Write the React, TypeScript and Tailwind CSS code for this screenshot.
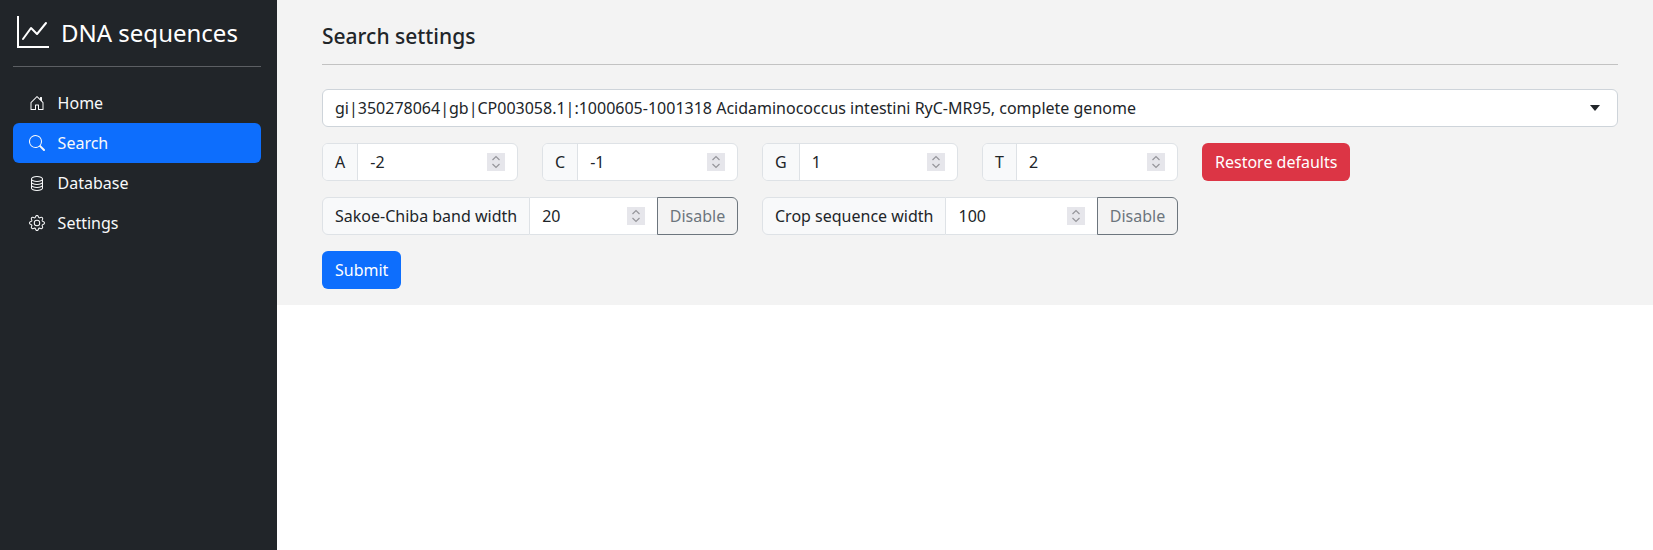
import { BsDatabase, BsGear, BsGraphUp, BsHouseDoor, BsSearch } from "react-icons/bs";

const navItems = [
  { label: "Home", icon: BsHouseDoor },
  { label: "Search", icon: BsSearch, active: true },
  { label: "Database", icon: BsDatabase },
  { label: "Settings", icon: BsGear },
];

const inputClass =
  "min-w-0 flex-1 bg-white pl-3 text-base text-[#212529] outline-none appearance-none [&::-webkit-inner-spin-button]:appearance-none";

function Spinner() {
  return (
    <span className="flex size-[18px] shrink-0 items-center justify-center bg-[#e6e6eb]">
      <svg width="10" height="16" viewBox="0 0 10 16" fill="none" stroke="#96969b" strokeWidth="1.2">
        <path d="M1.5 6 5 2.5 8.5 6" />
        <path d="M1.5 10 5 13.5 8.5 10" />
      </svg>
    </span>
  );
}

function LetterInput({ letter, value }: { letter: string; value: string }) {
  return (
    <div className="flex h-[38px] w-[196px] overflow-hidden rounded-md border border-[#dee2e6] bg-white">
      <span className="flex items-center border-r border-[#dee2e6] bg-[#f8f9fa] px-3 text-base text-[#212529]">
        {letter}
      </span>
      <input type="number" defaultValue={value} className={inputClass} />
      <span className="flex items-center pr-3">
        <Spinner />
      </span>
    </div>
  );
}

function WidthInput({ label, value }: { label: string; value: string }) {
  return (
    <div className="flex h-[38px] w-[416px]">
      <span className="flex items-center whitespace-nowrap rounded-l-md border border-[#dee2e6] bg-[#f8f9fa] px-3 text-base text-[#212529]">
        {label}
      </span>
      <span className="flex min-w-0 flex-1 border-y border-[#dee2e6] bg-white">
        <input type="number" defaultValue={value} className={inputClass} />
        <span className="flex items-center pr-3">
          <Spinner />
        </span>
      </span>
      <button className="w-[81px] shrink-0 rounded-r-md border border-[#6c757d] text-base text-[#6c757d]">
        Disable
      </button>
    </div>
  );
}

export default function App() {
  return (
    <div className="flex min-h-[550px] bg-white font-['Noto_Sans',sans-serif]">
      <aside className="w-[277px] shrink-0 bg-[#212529] pt-[13px] pr-4 pl-[13px] text-white">
        <div className="flex h-[40px] items-center gap-3 pl-[4px]">
          <BsGraphUp size={32} className="mb-[2px]" />
          <span className="text-2xl">DNA sequences</span>
        </div>
        <hr className="mt-[13px] mb-[16px] border-[#5c5f63]" />
        <nav className="flex flex-col">
          {navItems.map(({ label, icon: Icon, active }) => (
            <a
              key={label}
              href="#"
              className={`flex h-[40px] items-center gap-[12.6px] rounded-md pl-4 text-base text-[#f8f9fa] ${
                active ? "bg-[#0d6efd]" : ""
              }`}
            >
              <Icon size={16} />
              {label}
            </a>
          ))}
        </nav>
      </aside>

      <main className="flex-1">
        <section className="flex flex-col bg-[#f3f3f3] pt-6 pr-[35px] pb-4 pl-[45px]">
          <h1 className="text-[21px] leading-6 font-medium text-[#212529]">Search settings</h1>
          <hr className="mt-[16px] mb-6 border-[#c2c2c2]" />
          <div className="relative">
            <select className="h-[38px] w-full appearance-none rounded-md border border-[#ced4da] bg-white pl-3 text-base text-[#212529]">
              <option>
                gi|350278064|gb|CP003058.1|:1000605-1001318 Acidaminococcus intestini RyC-MR95, complete genome
              </option>
            </select>
            <svg
              className="pointer-events-none absolute top-[16px] right-[18px]"
              width="10"
              height="6"
              viewBox="0 0 10 6"
              fill="#212529"
            >
              <path d="M0 0h10L5 6z" />
            </svg>
          </div>
          <div className="mt-4 flex gap-6">
            <LetterInput letter="A" value="-2" />
            <LetterInput letter="C" value="-1" />
            <LetterInput letter="G" value="1" />
            <LetterInput letter="T" value="2" />
            <button className="h-[38px] rounded-md bg-[#dc3545] px-[13px] text-base text-white">
              Restore defaults
            </button>
          </div>
          <div className="mt-4 flex gap-6">
            <WidthInput label="Sakoe-Chiba band width" value="20" />
            <WidthInput label="Crop sequence width" value="100" />
          </div>
          <button className="mt-4 h-[38px] w-fit rounded-md bg-[#0d6efd] px-[13px] text-base text-white">
            Submit
          </button>
        </section>
      </main>
    </div>
  );
}
